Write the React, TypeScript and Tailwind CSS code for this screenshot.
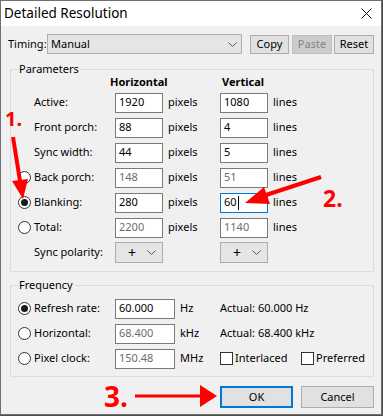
import React from 'react';

type FieldProps = { value: string; muted?: boolean; focused?: boolean; wide?: boolean };

const Field: React.FC<FieldProps> = ({ value, muted, focused, wide }) => (
    <div
        className={
            'flex h-[20px] shrink-0 items-center bg-white px-[3px] ' +
            (wide ? 'w-[60px] ' : 'w-[48px] ') +
            (focused ? 'border border-[#0078d7] ' : 'border border-[#7a7a7a] ') +
            (muted ? 'text-[#6d6d6d]' : 'text-black')
        }
    >
        {value}
        {focused && <span className="ml-[1px] h-[14px] w-[1px] bg-black" />}
    </div>
);

const Radio: React.FC<{ checked?: boolean }> = ({ checked }) => (
    <span className="flex h-[13px] w-[13px] items-center justify-center rounded-full border border-[#333333] bg-white">
        {checked && <span className="h-[7px] w-[7px] rounded-full bg-[#1a1a1a]" />}
    </span>
);

const Check: React.FC = () => <span className="h-[13px] w-[13px] shrink-0 border border-[#333333] bg-white" />;

const Chevron: React.FC = () => (
    <svg width="9" height="5" viewBox="0 0 9 5" className="shrink-0 text-[#555]">
        <path d="M0.5 0.5 L4.5 4.5 L8.5 0.5" fill="none" stroke="currentColor" strokeWidth="1" />
    </svg>
);

const Polarity: React.FC = () => (
    <div className="flex h-[21px] w-[48px] shrink-0 items-center border border-[#adadad] bg-[#e5e5e5] pl-[12px] pr-[6px]">
        <span className="flex-1 text-[14px] leading-none">+</span>
        <Chevron />
    </div>
);

type Row = { label: string; h: string; v: string; radio?: 'on' | 'off'; muted?: boolean; focusV?: boolean };

const rows: Row[] = [
    { label: 'Active:', h: '1920', v: '1080' },
    { label: 'Front porch:', h: '88', v: '4' },
    { label: 'Sync width:', h: '44', v: '5' },
    { label: 'Back porch:', h: '148', v: '51', radio: 'off', muted: true },
    { label: 'Blanking:', h: '280', v: '60', radio: 'on', focusV: true },
    { label: 'Total:', h: '2200', v: '1140', radio: 'off', muted: true },
];

const Button: React.FC<{ label: string; disabled?: boolean; className?: string }> = ({ label, disabled, className }) => (
    <div
        className={
            'flex shrink-0 items-center justify-center border ' +
            (disabled ? 'border-[#bfbfbf] bg-[#cccccc] text-[#838383] ' : 'border-[#adadad] bg-[#e1e1e1] text-black ') +
            (className ?? '')
        }
    >
        {label}
    </div>
);

const App: React.FC = () => {
    return (
        <div className="relative h-[416px] w-[383px] bg-[#4b4b4b] font-['Noto_Sans',sans-serif] text-[11px] text-black">
            <div className="flex h-[415px] w-[382px] flex-col border border-[#707070] bg-[#f0f0f0]">
                {/* title bar */}
                <div className="flex h-[25px] items-center justify-between bg-white pl-[3px] pr-[9px]">
                    <span className="text-[13.5px]">Detailed Resolution</span>
                    <svg width="11" height="11" viewBox="0 0 11 11">
                        <path d="M0.5 0.5 L10.5 10.5 M10.5 0.5 L0.5 10.5" stroke="#111" strokeWidth="1" />
                    </svg>
                </div>

                <div className="flex flex-col px-[7px] pt-[8px]">
                    {/* timing */}
                    <div className="flex h-[20px] items-center">
                        <span className="w-[39px] shrink-0">Timing:</span>
                        <div className="flex h-[20px] w-[195px] shrink-0 items-center border border-[#adadad] bg-[#e5e5e5] pl-[3px] pr-[4px]">
                            <span className="flex-1">Manual</span>
                            <Chevron />
                        </div>
                        <Button label="Copy" className="ml-[8px] h-[19px] w-[39px]" />
                        <Button label="Paste" disabled className="ml-[3px] h-[19px] w-[40px]" />
                        <Button label="Reset" className="ml-[2px] h-[19px] w-[40px]" />
                    </div>

                    {/* parameters */}
                    <div className="relative ml-[2px] mt-[15px] border border-[#dcdcdc] pb-[6px] pl-[7px] pt-[4px]">
                        <span className="absolute left-[7px] top-[-9px] bg-[#f0f0f0] px-[1px] leading-[16px]">Parameters</span>
                        <div className="flex h-[16px] items-center pl-[92px] font-bold">
                            <span className="w-[112px]">Horizontal</span>
                            <span>Vertical</span>
                        </div>
                        {rows.map((r) => (
                            <div key={r.label} className="flex h-[25px] items-center">
                                <div className="w-[16px] shrink-0">{r.radio && <Radio checked={r.radio === 'on'} />}</div>
                                <span className="w-[81px] shrink-0">{r.label}</span>
                                <Field value={r.h} muted={r.muted} />
                                <span className="w-[57px] shrink-0 pl-[5px]">pixels</span>
                                <Field value={r.v} muted={r.muted} focused={r.focusV} />
                                <span className="pl-[5px]">lines</span>
                            </div>
                        ))}
                        <div className="flex h-[25px] items-center">
                            <div className="w-[16px] shrink-0" />
                            <span className="w-[81px] shrink-0">Sync polarity:</span>
                            <Polarity />
                            <div className="w-[57px] shrink-0" />
                            <Polarity />
                        </div>
                    </div>

                    {/* frequency */}
                    <div className="relative ml-[2px] mt-[13px] border border-[#dcdcdc] pb-[5px] pl-[7px] pt-[10px]">
                        <span className="absolute left-[7px] top-[-9px] bg-[#f0f0f0] px-[1px] leading-[16px]">Frequency</span>
                        <div className="flex h-[25px] items-center">
                            <div className="w-[16px] shrink-0"><Radio checked /></div>
                            <span className="w-[81px] shrink-0">Refresh rate:</span>
                            <Field value="60.000" wide />
                            <span className="w-[45px] shrink-0 pl-[5px]">Hz</span>
                            <span>Actual: 60.000 Hz</span>
                        </div>
                        <div className="flex h-[25px] items-center">
                            <div className="w-[16px] shrink-0"><Radio /></div>
                            <span className="w-[81px] shrink-0">Horizontal:</span>
                            <Field value="68.400" wide muted />
                            <span className="w-[45px] shrink-0 pl-[5px]">kHz</span>
                            <span>Actual: 68.400 kHz</span>
                        </div>
                        <div className="flex h-[25px] items-center">
                            <div className="w-[16px] shrink-0"><Radio /></div>
                            <span className="w-[81px] shrink-0">Pixel clock:</span>
                            <Field value="150.48" wide muted />
                            <span className="w-[45px] shrink-0 pl-[5px]">MHz</span>
                            <div className="flex w-[81px] shrink-0 items-center gap-[2px]">
                                <Check />
                                <span>Interlaced</span>
                            </div>
                            <div className="flex items-center gap-[2px]">
                                <Check />
                                <span>Preferred</span>
                            </div>
                        </div>
                    </div>

                    {/* buttons */}
                    <div className="mt-[9px] flex justify-end gap-[8px]">
                        <div className="flex h-[22px] w-[73px] items-center justify-center border-2 border-[#0078d7] bg-[#e1e1e1]">OK</div>
                        <Button label="Cancel" className="h-[22px] w-[73px]" />
                    </div>
                </div>
            </div>

            {/* annotations */}
            <svg className="pointer-events-none absolute left-0 top-0" width="383" height="416" viewBox="0 0 383 416">
                <path d="M13 137 L20 181" stroke="#ff0000" strokeWidth="4" />
                <polygon points="23,199 12,181 28,179" fill="#ff0000" />
                <path d="M321 177 L266 195" stroke="#ff0000" strokeWidth="4" />
                <polygon points="245,203 264,187 270,204" fill="#ff0000" />
                <path d="M135 396 L201 396" stroke="#ff0000" strokeWidth="3" />
                <polygon points="217,396 200,385 200,407" fill="#ff0000" />
            </svg>
            <span className="absolute left-[5px] top-[109px] text-[20px] font-bold leading-none text-[#ff0000]">1.</span>
            <span className="absolute left-[323px] top-[187px] text-[23px] font-bold leading-none text-[#ff0000]">2.</span>
            <span className="absolute left-[104px] top-[382px] text-[28px] font-bold leading-none text-[#ff0000]">3.</span>
        </div>
    );
};

export default App;
